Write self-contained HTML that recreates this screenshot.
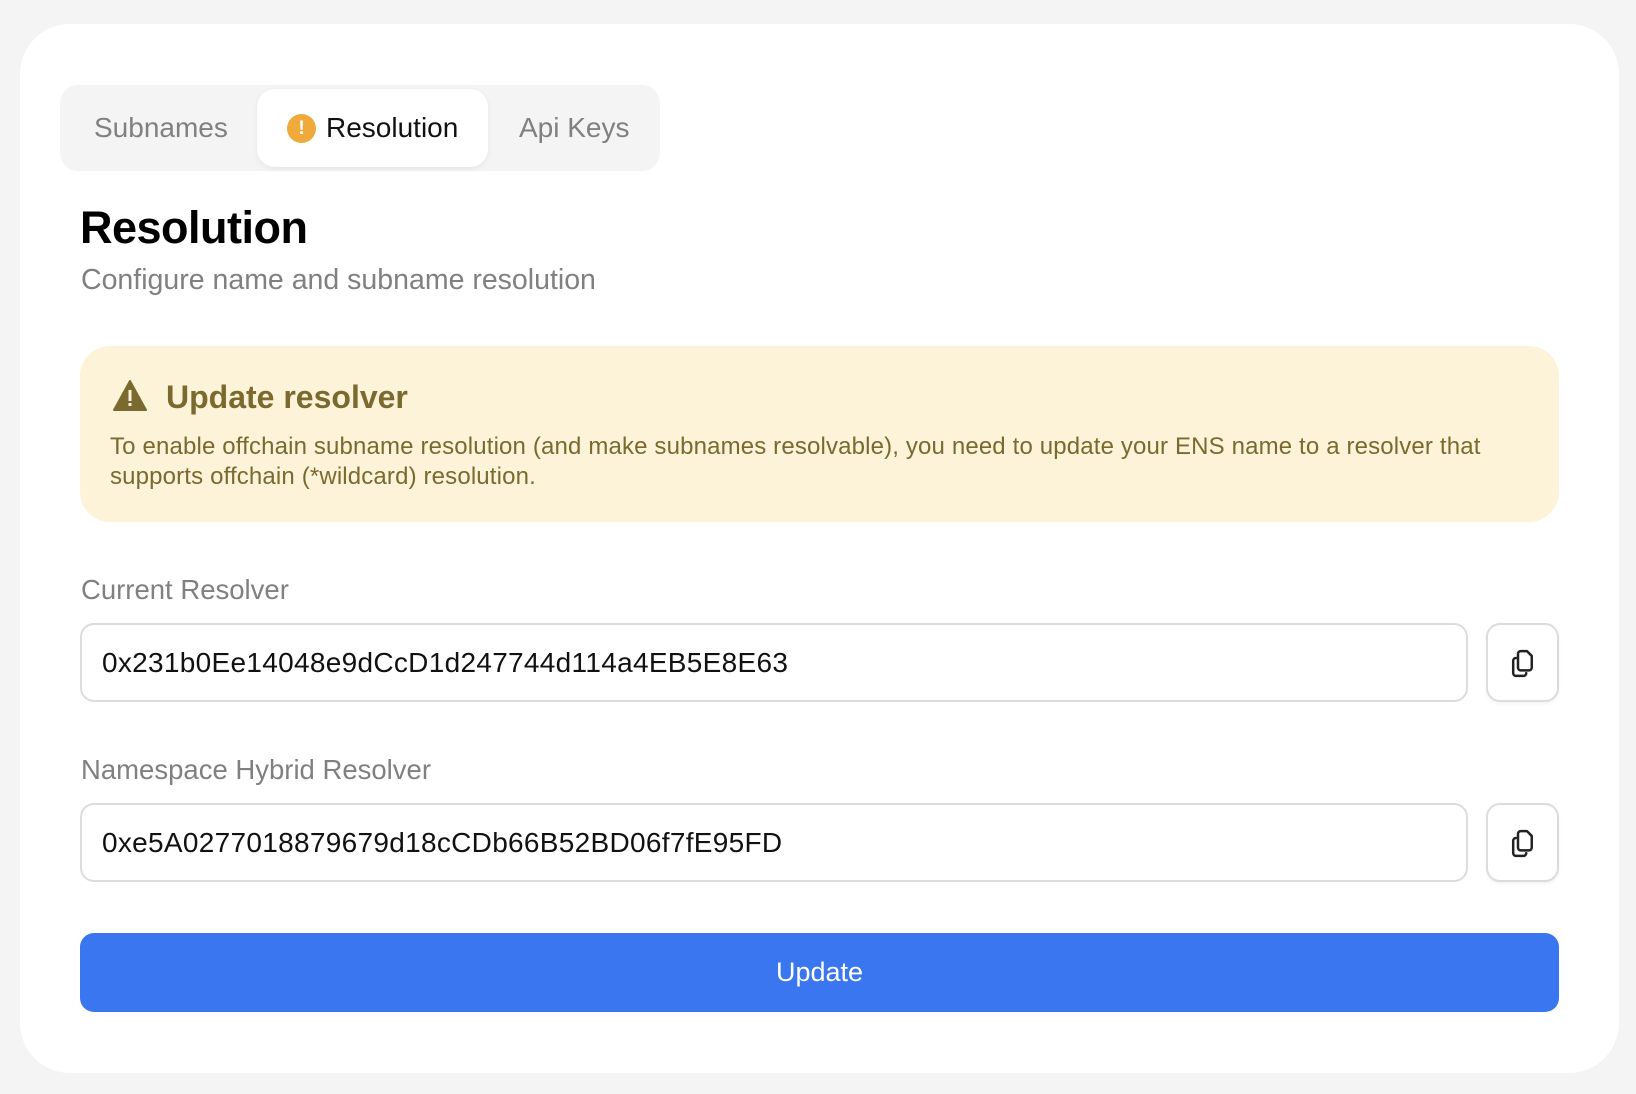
<!DOCTYPE html>
<html><head><meta charset="utf-8"><style>
*{box-sizing:border-box;margin:0;padding:0}
body{width:1636px;height:1094px;background:#f4f4f4;font-family:"Liberation Sans",sans-serif;position:relative;overflow:hidden}
.card{position:absolute;left:20px;top:24px;width:1599px;height:1049px;background:#fff;border-radius:50px}
.tabs{position:absolute;left:60px;top:85px;width:600px;height:86px;background:#f4f4f4;border-radius:18px}
.tab{position:absolute;top:0;height:86px;line-height:86px;font-size:28px;color:#808080}
.active{position:absolute;left:257px;top:89px;width:231px;height:78px;background:#fff;border-radius:18px;box-shadow:0 2px 6px rgba(0,0,0,.06)}
.abs{position:absolute;white-space:nowrap}
.alert{position:absolute;left:80px;top:346px;width:1479px;height:176px;background:#fdf3d8;border-radius:30px}
.inp{position:absolute;left:80px;width:1388px;height:79px;border:2px solid #dcdcdc;border-radius:14px;font-size:28px;color:#111;line-height:75px;padding-left:20px;letter-spacing:0.3px}
.cp{position:absolute;left:1486px;width:73px;height:79px;border:2px solid #dcdcdc;border-radius:14px;box-shadow:0 2px 3px rgba(0,0,0,.05)}
.cp svg{position:absolute;left:19px;top:22px}
.lbl{position:absolute;left:81px;font-size:27.5px;color:#808080}
.btn{position:absolute;left:80px;top:933px;width:1479px;height:79px;background:#3a76f0;border-radius:14px;color:#fff;font-size:27px;text-align:center;line-height:79px}
</style></head><body>
<div class="card"></div>
<div class="tabs"></div>
<div class="active"></div>
<div class="tab" style="left:94px;top:85px">Subnames</div>
<div class="abs" style="left:287px;top:114px;width:29px;height:29px;border-radius:50%;background:#f0a93b;color:#fff;font-size:19px;font-weight:bold;text-align:center;line-height:29px">!</div>
<div class="tab" style="left:326px;top:85px;color:#111">Resolution</div>
<div class="tab" style="left:519px;top:85px">Api Keys</div>
<div class="abs" style="left:80px;top:202px;font-size:45px;font-weight:bold;color:#000;letter-spacing:-0.5px">Resolution</div>
<div class="abs" style="left:81px;top:264px;font-size:28.5px;color:#808080">Configure name and subname resolution</div>
<div class="alert"></div>
<svg class="abs" style="left:113px;top:380px" width="34" height="31" viewBox="0 0 34 31"><path d="M17 1 L33 30 L1 30 Z" fill="#7a6a30" stroke="#7a6a30" stroke-width="2" stroke-linejoin="round"/><rect x="15.5" y="10" width="3" height="11" fill="#fdf3d8"/><rect x="15.5" y="23" width="3" height="3" fill="#fdf3d8"/></svg>
<div class="abs" style="left:166px;top:379px;font-size:32px;font-weight:bold;color:#7a6a30">Update resolver</div>
<div class="abs" style="left:110px;top:432px;font-size:24px;color:#7a6a30;line-height:30px;white-space:normal;width:1440px;letter-spacing:0.15px">To enable offchain subname resolution (and make subnames resolvable), you need to update your ENS name to a resolver that<br>supports offchain (*wildcard) resolution.</div>
<div class="lbl" style="top:574px">Current Resolver</div>
<div class="inp" style="top:623px">0x231b0Ee14048e9dCcD1d247744d114a4EB5E8E63</div>
<div class="cp" style="top:623px"><svg width="33" height="33" viewBox="0 0 24 24" fill="none" stroke="#222" stroke-width="1.8" stroke-linejoin="round" stroke-linecap="round"><path d="M10 3h4.5l3.5 3.5v8.5a2 2 0 0 1-2 2h-6a2 2 0 0 1-2-2V5a2 2 0 0 1 2-2z"/><path d="M6.5 8a2 2 0 0 0-2 2v9a2 2 0 0 0 2 2h5.5a2 2 0 0 0 2-2"/></svg></div>
<div class="lbl" style="top:754px">Namespace Hybrid Resolver</div>
<div class="inp" style="top:803px">0xe5A0277018879679d18cCDb66B52BD06f7fE95FD</div>
<div class="cp" style="top:803px"><svg width="33" height="33" viewBox="0 0 24 24" fill="none" stroke="#222" stroke-width="1.8" stroke-linejoin="round" stroke-linecap="round"><path d="M10 3h4.5l3.5 3.5v8.5a2 2 0 0 1-2 2h-6a2 2 0 0 1-2-2V5a2 2 0 0 1 2-2z"/><path d="M6.5 8a2 2 0 0 0-2 2v9a2 2 0 0 0 2 2h5.5a2 2 0 0 0 2-2"/></svg></div>
<div class="btn">Update</div>
</body></html>
